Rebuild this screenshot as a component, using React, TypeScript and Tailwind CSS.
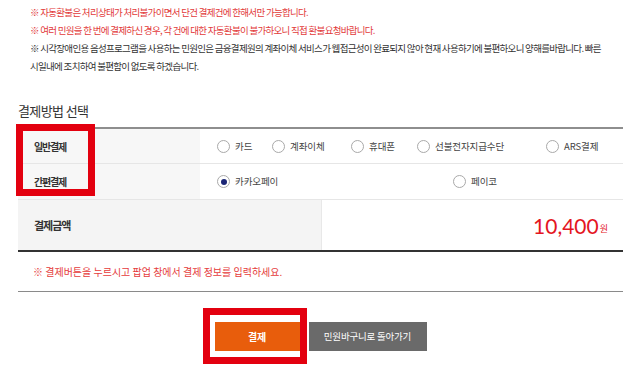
import React from "react";

const KR = { fontFamily: '"Noto Sans CJK KR", "Noto Sans", sans-serif' };

function Radio({ label, checked = false }: { label: string; checked?: boolean }) {
  return (
    <div className="flex items-center gap-[5px]">
      <span className="flex h-[13px] w-[13px] items-center justify-center rounded-full border border-[#a9a9a9] bg-white">
        {checked && <span className="h-[6px] w-[6px] rounded-full bg-[#1b2675]" />}
      </span>
      <span className="text-[9.5px] tracking-[-0.1px] text-[#444] whitespace-nowrap">{label}</span>
    </div>
  );
}

export default function App() {
  return (
    <div className="relative h-[376px] w-[639px] overflow-hidden bg-white" style={KR}>
      <div className="pl-[18px] pr-[16px]">
        {/* notes */}
        <div className="pt-[3px] pl-[12px] text-[9.5px] leading-[18px] tracking-[-0.7px] whitespace-nowrap">
          <div className="text-[#e23a3a]">※ 자동환불은 처리상태가 처리불가이면서 단건 결제건에 한해서만 가능합니다.</div>
          <div className="text-[#e23a3a]">※ 여러 민원을 한 번에 결제하신 경우, 각 건에 대한 자동환불이 불가하오니 직접 환불요청바랍니다.</div>
          <div className="text-[#333]">
            ※ 시각장애인용 음성프로그램을 사용하는 민원인은 금융결제원의 계좌이체 서비스가 웹접근성이 완료되지 않아 현재 사용하기에 불편하오니 양해를바랍니다. 빠른
          </div>
          <div className="text-[#333]">시일내에 조치하여 불편함이 없도록 하겠습니다.</div>
        </div>

        {/* title */}
        <div className="mt-[26px] mb-[6px] text-[13px] leading-[20px] tracking-[-0.6px] text-[#333]">결제방법 선택</div>

        {/* table */}
        <div className="border-t-2 border-[#8e8e8e]">
          <div className="flex h-[35px] border-b border-[#e6e6e6]">
            <div className="flex w-[182px] items-center bg-[#f7f7f7] pl-[16px] text-[10px] font-bold tracking-[-1.2px] text-[#333]">
              일반결제
            </div>
            <div className="grid flex-1 grid-cols-[55px_79px_66px_129px_1fr] items-center pl-[17px]">
              <Radio label="카드" />
              <Radio label="계좌이체" />
              <Radio label="휴대폰" />
              <Radio label="선불전자지급수단" />
              <Radio label="ARS결제" />
            </div>
          </div>
          <div className="flex h-[36px] border-b border-[#e6e6e6]">
            <div className="flex w-[182px] items-center bg-[#f7f7f7] pl-[16px] text-[10px] font-bold tracking-[-1.2px] text-[#333]">
              간편결제
            </div>
            <div className="grid flex-1 grid-cols-[236px_1fr] items-center pl-[17px]">
              <Radio label="카카오페이" checked />
              <Radio label="페이코" />
            </div>
          </div>
          <div className="flex h-[52px] border-b-2 border-[#333]">
            <div className="flex w-[303px] items-center bg-[#f4f4f4] pl-[16px] text-[11px] font-bold tracking-[-1px] text-[#333]">
              결제금액
            </div>
            <div className="flex flex-1 items-center justify-end border-l border-[#e8e8e8] pr-[15px] pt-[1px]">
              <span className="text-[21px] leading-none text-[#e4161f]" style={{ fontFamily: "Lato, sans-serif" }}>
                10,400
              </span>
              <span className="ml-[1px] mt-[6px] text-[9px] text-[#e4161f]">원</span>
            </div>
          </div>
        </div>

        {/* notice */}
        <div className="mt-[10px] pl-[15px] text-[10px] leading-[20px] tracking-[0px] text-[#e53b3b]">
          ※ 결제버튼을 누르시고 팝업 창에서 결제 정보를 입력하세요.
        </div>
        <div className="mt-[9px] h-[1px] bg-[#8a8a8a]" />

        {/* buttons */}
        <div className="mt-[30px] flex justify-center gap-[9px]">
          <button className="flex h-[29px] w-[85px] items-center justify-center bg-[#e85d0c] text-[10px] font-bold tracking-[-0.3px] text-white">
            결제
          </button>
          <button className="flex h-[29px] w-[118px] items-center justify-center bg-[#6a6a6a] text-[9.5px] tracking-[-0.2px] text-white">
            민원바구니로 돌아가기
          </button>
        </div>
      </div>

      {/* annotation boxes */}
      <div className="absolute left-[16px] top-[124px] h-[72px] w-[79px] border-[7px] border-[#e3000f]" />
      <div className="absolute left-[203px] top-[308px] h-[56px] w-[104px] border-[7px] border-[#e3000f]" />
    </div>
  );
}
